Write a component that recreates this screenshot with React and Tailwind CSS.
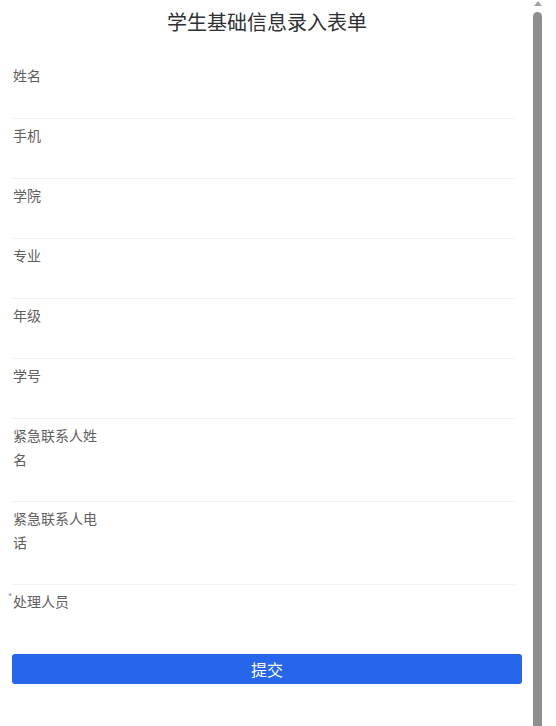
// App.jsx
const font = '"Noto Sans CJK SC", "Noto Sans", sans-serif';

const fields = [
  { label: "姓名" },
  { label: "手机" },
  { label: "学院" },
  { label: "专业" },
  { label: "年级" },
  { label: "学号" },
  { label: "紧急联系人姓名", wrap: true },
  { label: "紧急联系人电话", wrap: true },
  { label: "处理人员", required: true, last: true },
];

function Field({ label, required, last, wrap }) {
  return (
    <div
      className={
        "relative flex pl-[1px] pt-[4px] " +
        (wrap ? "pb-[30px] " : "pb-[31px] ") +
        (last ? "" : "border-b border-[#f0f1f3] mr-[7px]")
      }
    >
      {required && (
        <span className="absolute left-[-4px] top-[7px] text-[9px] leading-none text-[#8a8a8a]">*</span>
      )}
      <label className="w-[86px] text-[14px] leading-[24px] text-[#5f6061] break-all">{label}</label>
      <input className="flex-1 min-w-0 bg-transparent text-[14px] outline-none" />
    </div>
  );
}

export default function App() {
  return (
    <div className="flex w-[556px] h-[726px] overflow-hidden bg-white" style={{ fontFamily: font }}>
      {/* form */}
      <div className="w-[532px] pl-[12px] pr-[10px] flex flex-col">
        <h1 className="pt-[7px] pb-[22px] text-center text-[20px] leading-[30px] text-[#2f3033] font-normal">
          学生基础信息录入表单
        </h1>
        <form className="flex flex-col">
          {fields.map((f) => (
            <Field key={f.label} {...f} />
          ))}
          <button
            type="button"
            className="mt-[10px] h-[30px] w-full rounded-[3px] bg-[#2766ea] text-[16px] text-white"
          >
            提交
          </button>
        </form>
      </div>
      {/* scrollbar */}
      <div className="w-[24px] flex flex-col items-start pl-[1px]">
        <div className="ml-[1px] mt-[1px] h-0 w-0 border-x-[4px] border-b-[5px] border-x-transparent border-b-[#a3a3a3]" />
        <div className="mt-[6px] flex-1 w-[9px] rounded-t-full bg-[#8f8f8f]" />
      </div>
    </div>
  );
}
